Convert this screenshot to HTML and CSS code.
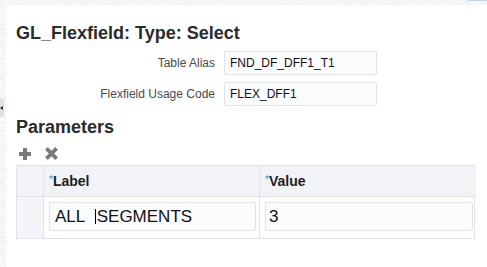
FILE: index.html
```html
<!DOCTYPE html>
<html>
<head>
<meta charset="utf-8">
<link rel="stylesheet" href="styles.css">
</head>
<body>
<div class="topstrip"><span class="topmark"></span></div>
<div class="shell">
  <div class="gutter"><div class="splitter"><span class="tri"></span></div></div>
  <div class="panel">
    <h1 class="title">GL_Flexfield: Type: Select</h1>
    <div class="form">
      <label class="flabel">Table Alias</label>
      <div class="finput">FND_DF_DFF1_T1</div>
      <label class="flabel">Flexfield Usage Code</label>
      <div class="finput">FLEX_DFF1</div>
    </div>
    <h2 class="title sub">Parameters</h2>
    <div class="toolbar">
      <svg class="ico" width="12" height="12" viewBox="0 0 12 12"><rect x="4" y="0" width="4" height="12" fill="#7a7a7a"/><rect x="0" y="4" width="12" height="4" fill="#7a7a7a"/></svg>
      <svg class="ico x" width="13" height="13" viewBox="0 0 13 13"><path d="M1.4 1.4 L11.6 11.6 M11.6 1.4 L1.4 11.6" stroke="#7a7a7a" stroke-width="3.8" stroke-linecap="butt"/></svg>
    </div>
    <div class="table">
      <div class="cell head stub"></div>
      <div class="cell head"><span class="req">*</span>Label</div>
      <div class="cell head last"><span class="req">*</span>Value</div>
      <div class="cell body stub"></div>
      <div class="cell body"><div class="tinput">ALL&nbsp;&nbsp;<span class="caret"></span>SEGMENTS</div></div>
      <div class="cell body last"><div class="tinput v">3</div></div>
    </div>
  </div>
</div>
</body>
</html>
```
FILE: styles.css
```css
html, body {
  margin: 0;
  padding: 0;
  height: 100%;
}
body {
  font-family: "Liberation Sans", Arial, sans-serif;
  background: repeating-linear-gradient(45deg, #efefef 0 1px, #f9f9f9 1px 3px);
  display: flex;
  flex-direction: column;
  overflow: hidden;
}
.topstrip {
  height: 5px;
  display: flex;
  justify-content: flex-end;
  flex: none;
}
.topmark {
  width: 20px;
  height: 1px;
  background: #c5d3e2;
}
.shell {
  flex: 1;
  display: flex;
}
.gutter {
  width: 6px;
  flex: none;
}
.splitter {
  margin-top: 94px;
  width: 4px;
  height: 18px;
  background: #dbe1e7;
  display: flex;
  align-items: center;
}
.tri {
  width: 0;
  height: 0;
  border-top: 2.5px solid transparent;
  border-bottom: 2.5px solid transparent;
  border-right: 3px solid #2b2b2b;
}
.panel {
  flex: 1;
  background: #fff;
  padding-left: 10px;
}
.title {
  margin: 17px 0 0 0;
  font-size: 18px;
  line-height: 22px;
  font-weight: bold;
  color: #2b2b2b;
}
.title.sub {
  margin-top: 10px;
}
.form {
  display: grid;
  grid-template-columns: 199px 153px;
  column-gap: 9px;
  row-gap: 7px;
  margin-top: 7px;
}
.flabel {
  text-align: right;
  font-size: 12px;
  color: #4a4a4a;
  align-self: center;
}
.finput {
  box-sizing: border-box;
  height: 24px;
  border: 1px solid #dfe4e8;
  border-radius: 2px;
  background: #fbfcfe;
  font-size: 12px;
  color: #111;
  padding-left: 5px;
  line-height: 22px;
}
.toolbar {
  height: 27px;
  display: flex;
  align-items: center;
  gap: 14px;
  padding-left: 3px;
  padding-top: 4px;
  box-sizing: border-box;
}
.ico.x {
  margin-top: -1px;
}
.table {
  display: grid;
  grid-template-columns: 27px 216px 216px;
  grid-template-rows: 31px 41px;
  width: 459px;
  border: 1px solid #dfe3e8;
  box-sizing: border-box;
}
.cell {
  box-sizing: border-box;
  border-right: 1px solid #dfe3e8;
}
.cell.last {
  border-right: none;
}
.head {
  background: #f1f3f6;
  border-bottom: 1px solid #dfe3e8;
  font-size: 14px;
  font-weight: bold;
  color: #1f1f1f;
  display: flex;
  align-items: center;
  padding-left: 5px;
}
.req {
  color: #3a8fd8;
  font-size: 10px;
  font-weight: normal;
  margin-top: -4px;
}
.body {
  padding: 5px 3px 0 5px;
}
.body.stub {
  background: #f3f5f8;
}
.tinput {
  box-sizing: border-box;
  height: 29px;
  border: 1px solid #dfe4e8;
  border-radius: 2px;
  background: #fbfcfe;
  font-size: 17px;
  line-height: 27px;
  color: #111;
  padding-left: 5px;
  display: flex;
  align-items: center;
  white-space: pre;
}
.tinput.v {
  padding-left: 3px;
}
.caret {
  display: inline-block;
  width: 0;
  height: 15px;
  border-left: 1px solid #000;
  margin-right: 1px;
}
```
